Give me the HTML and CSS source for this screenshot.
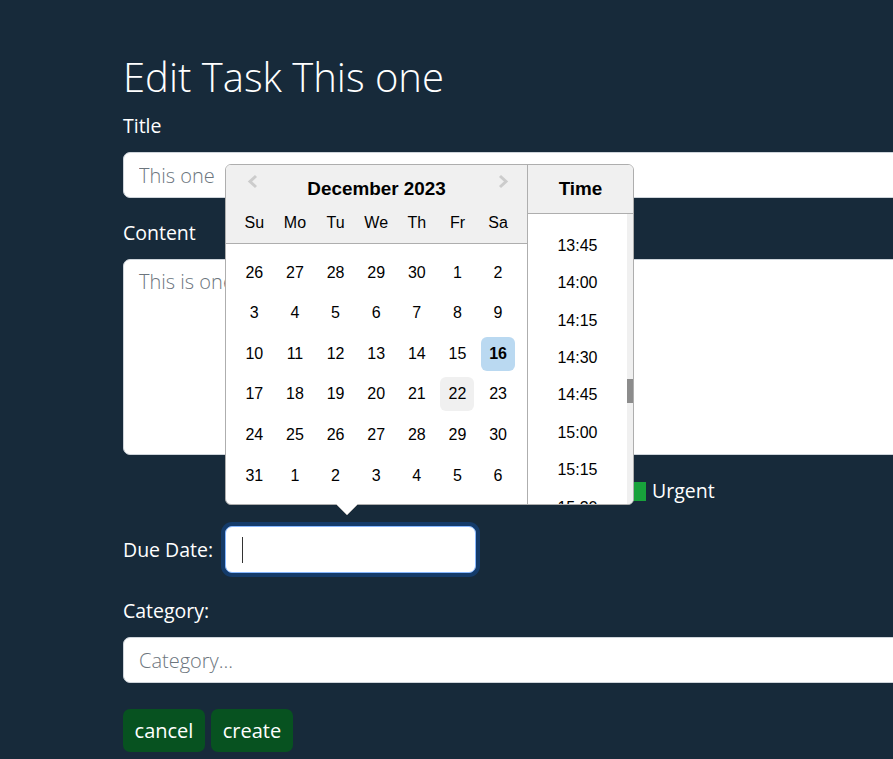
FILE: index.html
```html
<!DOCTYPE html>
<html lang="en">
<head>
<meta charset="utf-8">
<title>Edit Task</title>
<link rel="stylesheet" href="styles.css">
</head>
<body>
<main class="page">
  <h1 class="page-title">Edit Task This one</h1>
  <form class="task-form">
    <div class="group group-title">
      <label class="field-label" for="title">Title</label>
      <input class="form-control" id="title" type="text" value="This one">
    </div>
    <div class="group group-content">
      <label class="field-label" for="content">Content</label>
      <textarea class="form-control textarea" id="content">This is one of my tasks</textarea>
    </div>
    <div class="flags">
      <span class="flag-box"></span>
      <span class="flag-label">Urgent</span>
    </div>
    <div class="due-row">
      <label class="due-label">Due Date:</label>
      <div class="date-wrap">
        <div class="date-input"><span class="caret"></span></div>
        <div class="datepicker">
          <div class="dp-month">
            <div class="dp-header">
              <div class="dp-nav-row">
                <svg class="dp-nav" width="52" height="35" viewBox="0 0 52 35"><polyline points="30,11 24,16.5 30,22"/></svg>
                <div class="dp-current">December 2023</div>
                <svg class="dp-nav" width="52" height="35" viewBox="0 0 52 35"><polyline points="25,11 31,16.5 25,22"/></svg>
              </div>
              <div class="dp-week dp-daynames">
                <span class="dp-cell">Su</span><span class="dp-cell">Mo</span><span class="dp-cell">Tu</span><span class="dp-cell">We</span><span class="dp-cell">Th</span><span class="dp-cell">Fr</span><span class="dp-cell">Sa</span>
              </div>
            </div>
            <div class="dp-body">
              <div class="dp-week"><span class="dp-cell">26</span><span class="dp-cell">27</span><span class="dp-cell">28</span><span class="dp-cell">29</span><span class="dp-cell">30</span><span class="dp-cell">1</span><span class="dp-cell">2</span></div>
              <div class="dp-week"><span class="dp-cell">3</span><span class="dp-cell">4</span><span class="dp-cell">5</span><span class="dp-cell">6</span><span class="dp-cell">7</span><span class="dp-cell">8</span><span class="dp-cell">9</span></div>
              <div class="dp-week"><span class="dp-cell">10</span><span class="dp-cell">11</span><span class="dp-cell">12</span><span class="dp-cell">13</span><span class="dp-cell">14</span><span class="dp-cell">15</span><span class="dp-cell dp-today">16</span></div>
              <div class="dp-week"><span class="dp-cell">17</span><span class="dp-cell">18</span><span class="dp-cell">19</span><span class="dp-cell">20</span><span class="dp-cell">21</span><span class="dp-cell dp-hover">22</span><span class="dp-cell">23</span></div>
              <div class="dp-week"><span class="dp-cell">24</span><span class="dp-cell">25</span><span class="dp-cell">26</span><span class="dp-cell">27</span><span class="dp-cell">28</span><span class="dp-cell">29</span><span class="dp-cell">30</span></div>
              <div class="dp-week"><span class="dp-cell">31</span><span class="dp-cell">1</span><span class="dp-cell">2</span><span class="dp-cell">3</span><span class="dp-cell">4</span><span class="dp-cell">5</span><span class="dp-cell">6</span></div>
            </div>
          </div>
          <div class="dp-time">
            <div class="dp-time-header">Time</div>
            <div class="dp-time-body">
              <ul class="dp-time-list">
                <li>13:45</li><li>14:00</li><li>14:15</li><li>14:30</li><li>14:45</li><li>15:00</li><li>15:15</li><li>15:30</li>
              </ul>
              <div class="dp-scrollbar"><div class="dp-thumb"></div></div>
            </div>
          </div>
          <svg class="dp-arrow" width="22" height="12" viewBox="0 0 22 12"><polygon class="dp-arrow-fill" points="0,0 22,0 11,11"/><polyline class="dp-arrow-line" points="0.5,0.5 11,11 21.5,0.5"/></svg>
        </div>
      </div>
    </div>
    <div class="group group-category">
      <label class="field-label category-label" for="category">Category:</label>
      <input class="form-control" id="category" type="text" placeholder="Category...">
    </div>
    <div class="actions">
      <button type="button" class="btn">cancel</button>
      <button type="button" class="btn">create</button>
    </div>
  </form>
</main>
</body>
</html>
```

FILE: styles.css
```css
* { box-sizing: border-box; }

html, body {
  margin: 0;
  height: 759px;
  overflow: hidden;
}

body {
  background: #172a3a;
  color: #fff;
  font-family: "Open Sans", "Liberation Sans", sans-serif;
}

.page {
  padding: 52px 0 0 123px;
}

.page-title {
  margin: 0 0 10px;
  font-size: 40px;
  line-height: 49px;
  font-weight: 300;
}

.field-label {
  display: block;
  font-size: 19.5px;
  line-height: 30px;
  font-weight: 400;
  margin-bottom: 11px;
}

.form-control {
  display: block;
  width: 800px;
  height: 46px;
  margin: 0;
  padding: 7px 15px;
  border: 1px solid #ced4da;
  border-radius: 7px;
  background: #fff;
  color: #6c757d;
  font-family: "Open Sans", "Liberation Sans", sans-serif;
  font-size: 20px;
  line-height: 30px;
  font-weight: 300;
  outline: none;
}

.form-control::placeholder {
  color: #6c757d;
  opacity: 1;
}

.group-title { margin-bottom: 20px; }
.group-content { margin-bottom: 21px; }

.textarea {
  height: 196px;
  resize: none;
}

.flags {
  display: flex;
  align-items: center;
  gap: 6px;
  height: 30px;
  padding-left: 504px;
  margin-bottom: 20px;
}

.flag-box {
  width: 19px;
  height: 19px;
  background: #18a23b;
}

.flag-label {
  font-size: 19.5px;
  line-height: 30px;
}

.due-row {
  display: flex;
  align-items: center;
  height: 47px;
  margin-bottom: 22.5px;
}

.due-label {
  width: 102px;
  flex: none;
  font-size: 19.5px;
  line-height: 30px;
}

.date-wrap {
  position: relative;
}

.date-input {
  display: flex;
  align-items: center;
  width: 251px;
  height: 47px;
  padding-left: 16px;
  background: #fff;
  border: 1px solid #86b7fe;
  border-radius: 7px;
  box-shadow: 0 0 0 4px rgba(13, 110, 253, 0.25);
}

.caret {
  width: 1px;
  height: 26px;
  background: #333;
}

/* ---------- date picker popup ---------- */
.datepicker {
  position: absolute;
  left: 0;
  bottom: calc(100% + 21px);
  z-index: 10;
  display: flex;
  width: 409px;
  background: #fff;
  border: 1px solid #aeaeae;
  border-radius: 6px;
  color: #000;
  font-family: "Liberation Sans", Arial, sans-serif;
  font-size: 16px;
}

.dp-month {
  width: 301px;
  flex: none;
}

.dp-header {
  background: #f0f0f0;
  border-bottom: 1px solid #aeaeae;
  border-top-left-radius: 5px;
}

.dp-nav-row {
  display: grid;
  grid-template-columns: 52px 1fr 52px;
  height: 35px;
}

.dp-nav polyline {
  fill: none;
  stroke: #ccc;
  stroke-width: 3;
}

.dp-current {
  padding-top: 13px;
  line-height: 22px;
  font-size: 18.88px;
  font-weight: bold;
  text-align: center;
}

.dp-daynames {
  margin: 3px 8px 0;
}

.dp-week {
  display: flex;
}

.dp-cell {
  width: 34px;
  height: 34px;
  margin: 3.32px;
  line-height: 34px;
  text-align: center;
  border-radius: 6px;
}

.dp-body {
  padding: 8px;
}

.dp-today {
  background: #bad9f1;
  font-weight: bold;
}

.dp-hover {
  background: #f0f0f0;
}

.dp-time {
  flex: 1;
  display: flex;
  flex-direction: column;
  border-left: 1px solid #aeaeae;
  border-radius: 0 5px 5px 0;
  overflow: hidden;
}

.dp-time-header {
  background: #f0f0f0;
  border-bottom: 1px solid #aeaeae;
  padding: 13px 0;
  line-height: 22px;
  font-size: 18.88px;
  font-weight: bold;
  text-align: center;
}

.dp-time-body {
  flex: 1;
  display: flex;
  height: 290px;
}

.dp-time-list {
  flex: 1;
  height: 290px;
  margin: 0;
  padding: 13.3px 0 0;
  list-style: none;
  overflow: hidden;
}

.dp-time-list li {
  height: 37.4px;
  line-height: 37.4px;
  text-align: center;
}

.dp-scrollbar {
  width: 6px;
  flex: none;
  background: #f0f0f0;
}

.dp-thumb {
  height: 24px;
  margin-top: 165px;
  background: #8c8c8c;
}

.dp-arrow {
  position: absolute;
  top: calc(100% - 0.5px);
  left: 110px;
}

.dp-arrow-fill { fill: #fff; }
.dp-arrow-line { fill: none; stroke: #aeaeae; stroke-width: 1; }

/* ---------- bottom ---------- */
.category-label {
  margin-bottom: 11.5px;
}

.group-category {
  margin-bottom: 26px;
}

.actions {
  display: flex;
  gap: 6px;
}

.btn {
  width: 82px;
  height: 43px;
  padding: 0;
  border: 0;
  border-radius: 7px;
  background: #075220;
  color: #fff;
  font-family: "Open Sans", "Liberation Sans", sans-serif;
  font-size: 20px;
  line-height: 30px;
  font-weight: 400;
}
```
